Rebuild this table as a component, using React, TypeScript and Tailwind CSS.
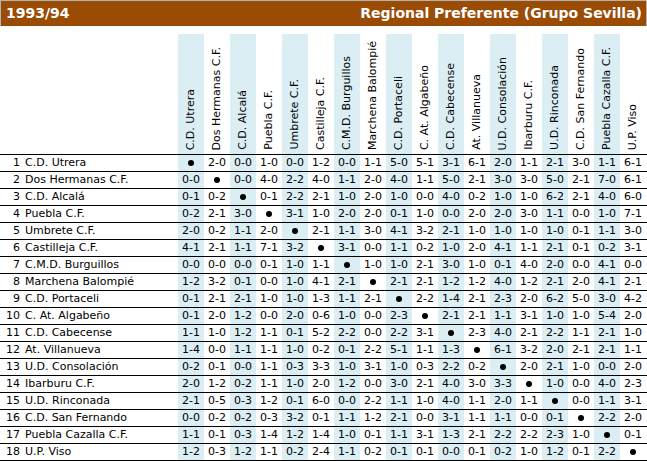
const teams = [
  "C.D. Utrera",
  "Dos Hermanas C.F.",
  "C.D. Alcalá",
  "Puebla C.F.",
  "Umbrete C.F.",
  "Castilleja C.F.",
  "C.M.D. Burguillos",
  "Marchena Balompié",
  "C.D. Portaceli",
  "C. At. Algabeño",
  "C.D. Cabecense",
  "At. Villanueva",
  "U.D. Consolación",
  "Ibarburu C.F.",
  "U.D. Rinconada",
  "C.D. San Fernando",
  "Puebla Cazalla C.F.",
  "U.P. Viso",
];

// "x" marks the diagonal (a team against itself)
const rows = [
  "x 2-0 0-0 1-0 0-0 1-2 0-0 1-1 5-0 5-1 3-1 6-1 2-0 1-1 2-1 3-0 1-1 6-1",
  "0-0 x 0-0 4-0 2-2 4-0 1-1 2-0 4-0 1-1 5-0 2-1 3-0 3-0 5-0 2-1 7-0 6-1",
  "0-1 0-2 x 0-1 2-2 2-1 1-0 2-0 1-0 0-0 4-0 0-2 1-0 1-0 6-2 2-1 4-0 6-0",
  "0-2 2-1 3-0 x 3-1 1-0 2-0 2-0 0-1 1-0 0-0 2-0 2-0 3-0 1-1 0-0 1-0 7-1",
  "2-0 0-2 1-1 2-0 x 2-1 1-1 3-0 4-1 3-2 2-1 1-0 1-0 1-0 1-0 0-1 1-1 3-0",
  "4-1 2-1 1-1 7-1 3-2 x 3-1 0-0 1-1 0-2 1-0 2-0 4-1 1-1 2-1 0-1 0-2 3-1",
  "0-0 0-0 0-0 0-1 1-0 1-1 x 1-0 1-0 2-1 3-0 1-0 0-1 4-0 2-0 0-0 4-1 0-0",
  "1-2 3-2 0-1 0-0 1-0 4-1 2-1 x 2-1 2-1 1-2 1-2 4-0 1-2 2-1 2-0 4-1 2-1",
  "0-1 2-1 2-1 1-0 1-0 1-3 1-1 2-1 x 2-2 1-4 2-1 2-3 2-0 6-2 5-0 3-0 4-2",
  "0-1 2-0 1-2 0-0 2-0 0-6 1-0 0-0 2-3 x 2-1 2-1 1-1 3-1 1-0 1-0 5-4 2-0",
  "1-1 1-0 1-2 1-1 0-1 5-2 2-2 0-0 2-2 3-1 x 2-3 4-0 2-1 2-2 1-1 2-1 1-0",
  "1-4 0-0 1-1 1-1 1-0 0-2 0-1 2-2 5-1 1-1 1-3 x 6-1 3-2 2-0 2-1 2-1 1-1",
  "0-2 0-1 0-0 1-1 0-3 3-3 1-0 3-1 1-0 0-3 2-2 0-2 x 2-0 2-1 1-0 0-0 2-0",
  "2-0 1-2 0-2 1-1 1-0 2-0 1-2 0-0 3-0 2-1 4-0 3-0 3-3 x 1-0 0-0 4-0 2-3",
  "2-1 0-5 0-3 1-2 0-1 6-0 0-0 2-2 1-1 1-0 4-0 1-1 2-0 1-1 x 0-0 1-1 3-1",
  "0-0 0-2 0-2 0-3 3-2 0-1 1-1 1-2 2-1 0-0 3-1 1-1 1-1 0-0 0-1 x 2-2 2-0",
  "1-1 0-1 0-3 1-4 1-2 1-4 1-0 0-1 1-1 3-1 1-3 2-1 2-2 2-2 2-3 1-0 x 0-1",
  "1-2 0-3 1-2 1-1 0-2 2-4 1-1 0-2 0-1 0-1 0-0 0-1 0-2 1-0 1-2 0-1 2-2 x",
].map((r) => r.split(" "));

const shade = (i: number) => (i % 2 === 0 ? "bg-[#dbeef4]" : "");

function HeaderBar() {
  return (
    <div className="flex h-[26px] items-center justify-between border-x border-t border-[#b4b4b4] bg-[#9a4b04] pl-[5px] pr-[4px] text-[14px] font-bold text-white [font-family:'DejaVu_Sans',sans-serif]">
      <span>1993/94</span>
      <span>Regional Preferente (Grupo Sevilla)</span>
    </div>
  );
}

function ColumnHeads() {
  return (
    <div className="grid h-[121px] grid-cols-[178px_repeat(18,26px)] border-b border-black">
      <div />
      {teams.map((t, i) => (
        <div key={t} className={`flex items-end justify-center pb-[4px] ${shade(i)}`}>
          <span className="rotate-180 whitespace-nowrap leading-[26px] [writing-mode:vertical-rl]">
            {t}
          </span>
        </div>
      ))}
    </div>
  );
}

function ResultRow({ pos, team, scores }: { pos: number; team: string; scores: string[] }) {
  return (
    <div className="grid h-[17px] grid-cols-[178px_repeat(18,26px)] border-b border-black leading-[16px]">
      <div className="flex whitespace-nowrap">
        <span className="w-[20px] text-right">{pos}</span>
        <span className="pl-[5px]">{team}</span>
      </div>
      {scores.map((s, i) => (
        <div key={i} className={`flex items-center justify-center ${shade(i)}`}>
          {s === "x" ? <span className="h-[6px] w-[6px] rounded-full bg-black" /> : s}
        </div>
      ))}
    </div>
  );
}

export default function App() {
  return (
    <div className="h-[461px] w-[647px] overflow-hidden bg-white text-[11px] text-black [font-family:'DejaVu_Sans',Verdana,sans-serif]">
      <HeaderBar />
      <div className="mt-[8px]">
        <ColumnHeads />
        {teams.map((t, i) => (
          <ResultRow key={t} pos={i + 1} team={t} scores={rows[i]} />
        ))}
      </div>
    </div>
  );
}
